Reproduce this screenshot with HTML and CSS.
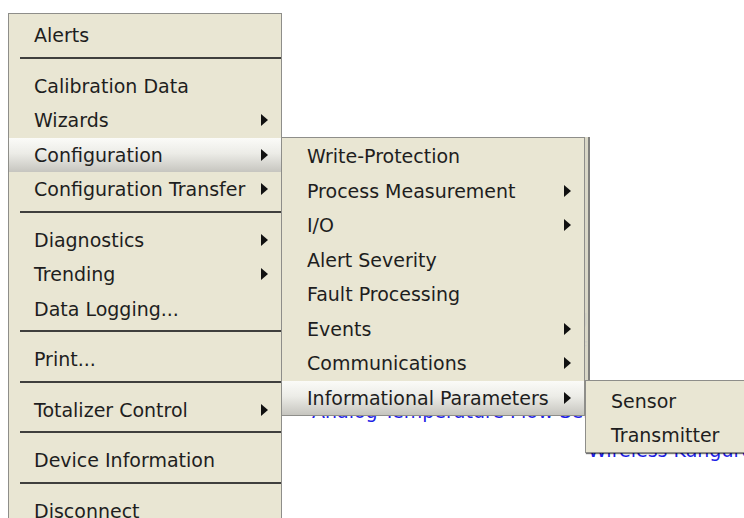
FILE: index.html
```html
<!DOCTYPE html>
<html lang="en">
<head>
    <meta charset="UTF-8">
    <title>Device Menu</title>
    <link rel="stylesheet" href="styles.css">
</head>
<body>

<div class="screen">
    <!-- page content behind the open menus -->
    <div class="backdrop">
        <span class="link link-mid">Cfg</span>
        <span class="link link-low">Ref</span>
        <span class="link link-under">Analog Temperature Flow Sensor</span>
        <span class="link link-end">Wireless Kanguru</span>
    </div>

    <div class="menu main-menu">
        <div class="item">Alerts</div>
        <div class="sep"></div>
        <div class="item">Calibration Data</div>
        <div class="item">Wizards<span class="arrow"></span></div>
        <div class="item active">Configuration<span class="arrow"></span></div>
        <div class="item">Configuration Transfer<span class="arrow"></span></div>
        <div class="sep"></div>
        <div class="item">Diagnostics<span class="arrow"></span></div>
        <div class="item">Trending<span class="arrow"></span></div>
        <div class="item">Data Logging...</div>
        <div class="sep"></div>
        <div class="item">Print...</div>
        <div class="sep"></div>
        <div class="item">Totalizer Control<span class="arrow"></span></div>
        <div class="sep"></div>
        <div class="item">Device Information</div>
        <div class="sep"></div>
        <div class="item">Disconnect</div>
    </div>

    <!-- Configuration submenu -->
    <div class="menu sub-menu level-2">
        <div class="item">Write-Protection</div>
        <div class="item">Process Measurement<span class="arrow"></span></div>
        <div class="item">I/O<span class="arrow"></span></div>
        <div class="item">Alert Severity</div>
        <div class="item">Fault Processing</div>
        <div class="item">Events<span class="arrow"></span></div>
        <div class="item">Communications<span class="arrow"></span></div>
        <div class="item active">Informational Parameters<span class="arrow"></span></div>
    </div>

    <!-- Informational Parameters submenu -->
    <div class="menu sub-menu level-3">
        <div class="item">Sensor</div>
        <div class="item">Transmitter</div>
    </div>
</div>

</body>
</html>
```

FILE: styles.css
```css
/* Global styles */
html, body {
    margin: 0;
    padding: 0;
    overflow: hidden;
    background: #ffffff;
}

body {
    font-family: 'DejaVu Sans', Verdana, sans-serif;
    font-size: 19px;
    color: #1e1e1e;
}

.screen {
    position: relative;
    width: 744px;
    height: 518px;
    overflow: hidden;
    padding: 13px 0 0 8px;
    box-sizing: border-box;
    background: #ffffff;
}

/* Blue links of the page under the menus */
.backdrop .link {
    position: absolute;
    color: #1f1fe6;
    white-space: nowrap;
    line-height: 22px;
}

.link-mid {
    left: 556px;
    top: 306px;
}

.link-low {
    left: 556px;
    top: 338px;
}

.link-under {
    left: 312px;
    top: 400px;
}

.link-end {
    left: 588px;
    top: 439px;
}

/* Menus */
.menu {
    background: #e9e6d3;
    border: 1px solid #8e8e8a;
    box-sizing: border-box;
}

.main-menu {
    position: relative;
    z-index: 1;
    width: 274px;
    padding-top: 4px;
    border-bottom: none;
}

.sub-menu {
    position: absolute;
}

.level-2 {
    z-index: 2;
    left: 281px;
    top: 137px;
    width: 304px;
    padding: 1px 0 0;
    box-shadow: 3px 0 0 rgba(233, 230, 211, 0.85), 5px 0 0 rgba(96, 96, 92, 0.8);
}

.level-3 {
    z-index: 3;
    left: 585px;
    top: 380px;
    width: 200px;
    padding: 3px 0 0;
    box-shadow: 1px 1px 1px rgba(0, 0, 0, 0.55);
}

.item {
    display: flex;
    align-items: center;
    justify-content: space-between;
    height: 34.5px;
    padding: 0 13px 0 25px;
    white-space: nowrap;
}

.level-3 .item {
    height: 34px;
}

.item.active {
    background: linear-gradient(to bottom, #fbfbf8 0%, #ececE7 45%, #c6c5bf 100%);
}

.arrow {
    width: 0;
    height: 0;
    border-left: 7px solid #111111;
    border-top: 6px solid transparent;
    border-bottom: 6px solid transparent;
}

.sep {
    height: 2px;
    margin: 4px 0 10px 11px;
    background: #3f3f3d;
}
```
